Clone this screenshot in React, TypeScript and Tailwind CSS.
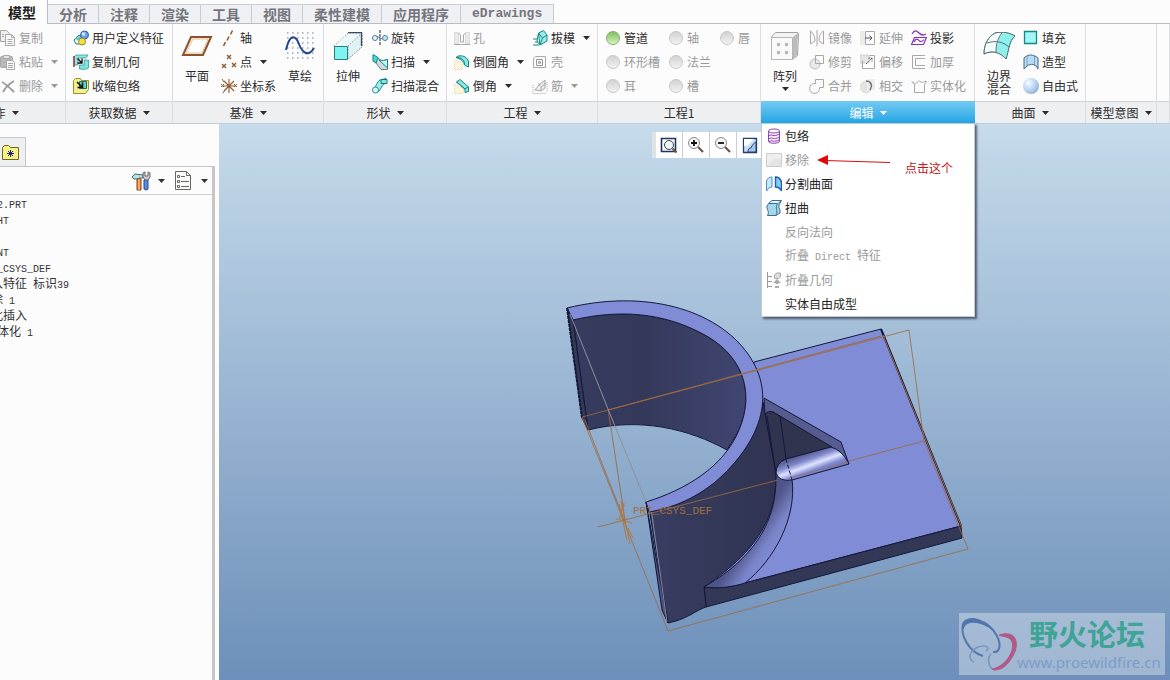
import { clsx } from "clsx";
import type { ReactNode } from "react";

const TABS = ["模型", "分析", "注释", "渲染", "工具", "视图", "柔性建模", "应用程序", "eDrawings"];

const TREE = [
  { name: "PRT2.PRT" },
  { name: "RIGHT" },
  { name: "TOP" },
  { name: "FRONT" },
  { name: "PRT_CSYS_DEF" },
  { name: "导入特征 标识39" },
  { name: "移除 1" },
  { name: "在此插入" },
  { name: "实体化 1", nested: true },
];

/* Latin runs are set half as wide as a Chinese character */
const Label = ({ text }: { text: string }) => (
  <span className="whitespace-pre">
    {text.split(/([\x20-\x7e]+)/).map((part, i) =>
      i % 2 === 1 ? (
        <span key={i} className="font-['Liberation_Mono',monospace] text-[10px]">
          {part}
        </span>
      ) : (
        part
      ),
    )}
  </span>
);

const Caret = ({ className }: { className?: string }) => (
  <svg viewBox="0 0 7 4" className={clsx("h-1 w-[7px] shrink-0", className)} fill="currentColor" aria-hidden="true">
    <path d="M0 0h7L3.5 4z" />
  </svg>
);

const Svg = ({ children, size = "sm" }: { children: ReactNode; size?: "sm" | "lg" }) => (
  <svg
    viewBox={size === "lg" ? "0 0 32 28" : "0 0 16 16"}
    className={clsx("shrink-0", size === "lg" ? "h-7 w-8" : "h-4 w-4")}
    fill="none"
    stroke="#a8a8a8"
    aria-hidden="true"
  >
    {children}
  </svg>
);

const ICONS = {
  copy: (
    <Svg>
      <path d="M.5.5h6l3 3v8h-9z" fill="#f0f0f0" />
      <path d="M5.5 4.5h6l3 3v8h-9z" fill="#fafafa" />
      <path d="M11.5 4.5v3h3M7.5 9.5h5M7.5 11.5h5M7.5 13.5h5M2 4.5h2M2 6.5h2" />
    </Svg>
  ),
  paste: (
    <Svg>
      <rect x=".5" y="2.5" width="12" height="11" rx="1" fill="#b9b9b9" />
      <path d="M3.5 1.5h6v3h-6z" fill="#e4e4e4" />
      <path d="M6.5 6.5h6l2 2v7h-8z" fill="#fafafa" />
      <path d="M8 9.5h5M8 11.5h5M8 13.5h5" />
    </Svg>
  ),
  remove: (
    <Svg>
      <path d="M2 4c4 2 8 6 12 10M14 3C9 6 5 10 3 14" stroke="#999" strokeWidth="1.8" />
    </Svg>
  ),
  udf: (
    <Svg>
      <path d="M1 10l5-5 5 4-5 5H3z" fill="#fff" stroke="#167c80" />
      <path d="M2 9l4-3 4 3-4 2z" fill="#5ed0d0" stroke="none" />
      <circle cx="11.5" cy="5" r="4" fill="#6a9ff0" stroke="#2d5fae" />
      <circle cx="10.5" cy="4" r="1.8" fill="#d8e8ff" stroke="none" />
      <ellipse cx="9" cy="11.5" rx="3.5" ry="3.5" fill="#f1e04a" stroke="#9a8a1c" />
    </Svg>
  ),
  copyGeom: (
    <Svg>
      <path d="M3 1h12l-2 3H5v7H1V3z" fill="#8be6e6" stroke="#2a8d8d" strokeWidth=".7" />
      <path d="M1 2v11" stroke="#b03030" strokeWidth="1.5" />
      <path d="M4.500 4.500l4 4M9 4.500V9H4.500" stroke="#111" strokeWidth="1.300" />
      <path d="M6.500 15v-4H11V6h4.500v8l-4 1.500z" fill="#7be3df" stroke="#2a8d8d" strokeWidth=".7" />
    </Svg>
  ),
  shrink: (
    <Svg>
      <path d="M.5 2.5l2-2h5l1 2h7v9l-3 4H.5z" fill="#f5ee8b" stroke="#9b8f2c" />
      <path d="M6.5 3.5h7v7h-7z" fill="#5fd0d0" stroke="#0e6f6f" />
      <path d="M4 4l5 5M9.5 4.5v5h-5" stroke="#111" strokeWidth="1.5" />
    </Svg>
  ),
  axis: (
    <Svg>
      <path d="M11.5.5l-2 4M8 6.500l-2 4M4.500 12l-2 4" stroke="#8f5a30" strokeWidth="1.6" />
    </Svg>
  ),
  point: (
    <Svg>
      <path d="M6 1l4 4M10 1L6 5M1 10l4 4M5 10l-4 4M11 9l4 4M15 9l-4 4" stroke="#8f5a30" strokeWidth="1.4" />
    </Svg>
  ),
  csys: (
    <Svg>
      <path d="M8 1v14M1 8h14M3 3l10 10M13 3L3 13" stroke="#8f5a30" strokeWidth="1.1" />
      <path d="M0 6l3 3M3 6L0 9M13 6l3 3M16 6l-3 3M1 1l2 3M2 15l2-3" stroke="#8f5a30" />
    </Svg>
  ),
  revolve: (
    <Svg>
      <path d="M8 0v16" stroke="#222" strokeDasharray="3 1" />
      <ellipse cx="3" cy="8" rx="2.5" ry="2.5" fill="#e4f6fa" stroke="#537a98" />
      <ellipse cx="13" cy="8" rx="2.5" ry="2.5" fill="#bfeff0" stroke="#537a98" />
      <path d="M5 6.500l5.500 2.500" stroke="#537a98" />
    </Svg>
  ),
  sweep: (
    <Svg>
      <path d="M5 3.5l5 3.500 5.500-1.500v10H9L4 9z" fill="#d3d8da" stroke="#6c8080" />
      <path d="M1 .5l5 3-2 5.500-3-2z" fill="#4fd6cf" stroke="#118a86" />
      <path d="M7 6l8.500 8V5.500l-4 1z" fill="#c8f5f1" stroke="#118a86" />
    </Svg>
  ),
  blend: (
    <Svg>
      <path d="M1 11C5 9 4 4 8 2l6-1.500v5C9 6 10 11 6 14z" fill="#9eeeea" stroke="#118a86" />
      <circle cx="3.5" cy="12" r="3" fill="#dffcfa" stroke="#1e90a8" />
      <path d="M9 1.5h6v4H9z" fill="#8ae5e0" stroke="#0f7b78" />
    </Svg>
  ),
  hole: (
    <Svg>
      <path d="M.5 2.5h4v11h-4zM11.5 2.5h4v11h-4z" fill="#e9e9e9" stroke="#c4c4c4" strokeDasharray="1 1" />
      <path d="M4.5 3l2 2v7h3V5l2-2M0 14.5h16" />
    </Svg>
  ),
  round: (
    <Svg>
      <path d="M.5 6v9.500h8V9z" fill="#fbf3da" stroke="#e2d6a8" strokeDasharray="1 1" />
      <path d="M2 3.5C5 0 14 2 14.500 8v5l-4-2C10 7 6 5 2 3.5z" fill="#8ce8e3" stroke="#128782" />
      <path d="M2 3.5C7 3 11 6 10.500 11" stroke="#128782" />
    </Svg>
  ),
  chamfer: (
    <Svg>
      <path d="M.5 6v9.500h9V11z" fill="#fbf3da" stroke="#e2d6a8" strokeDasharray="1 1" />
      <path d="M2.500 4l3.500-2.500 8.500 7.500v4.500l-3.500 1V11z" fill="#8ce8e3" stroke="#128782" />
      <path d="M2.500 4l8.500 7 3.500-2.500" stroke="#128782" />
    </Svg>
  ),
  draft: (
    <Svg>
      <path d="M6.5 3l5-2.500L15 5v6l-7 4z" fill="#9cece8" stroke="#118a86" />
      <path d="M6.5 3L5 11l3 4M6.5 3l4 5L8 15M10.5 8L15 5" stroke="#118a86" />
      <path d="M1 9h4M3 12h3M1 15h6" stroke="#128782" />
    </Svg>
  ),
  shell: (
    <Svg>
      <path d="M3.5 2.5h10v11h-12v-9z" />
      <path d="M4.500 5.500h6v6h-6z" stroke="#999" />
      <path d="M6.500 7.500h2v2h-2z" fill="#ddd" />
    </Svg>
  ),
  rib: (
    <Svg>
      <path d="M1 7v8.500h12l2-2V3.500" strokeDasharray="1 1" />
      <path d="M3 12l4-5 6-5v8l-4 3z" fill="#ececec" />
      <path d="M7 5v3M9 13V9l5-4" />
    </Svg>
  ),
  mirror: (
    <Svg>
      <path d="M8 0v16M1.5 1v13L6 11c0-5-2-8-4.500-10zM14.5 1v13L10 11c0-6 2-8 4.500-10z" />
    </Svg>
  ),
  trim: (
    <Svg>
      <path d="M6.5 1.5h8v8h-8z" />
      <circle cx="6" cy="10" r="5" fill="#e9e9e9" stroke="#bbb" />
      <path d="M6.5 5v4.500h4.500" />
    </Svg>
  ),
  merge: (
    <Svg>
      <path d="M6.5 5.5v-4h8v8h-4a5 5 0 1 1-4-4z" fill="#fafafa" />
    </Svg>
  ),
  extend: (
    <Svg>
      <path d="M0 1h5v14H0z" fill="#ececec" stroke="none" />
      <path d="M5.5 1.5h9v13h-9z" />
      <path d="M5 8h7M9.5 5.5L12 8l-2.500 2.500" stroke="#555" />
    </Svg>
  ),
  offset: (
    <Svg>
      <path d="M0 1h9v8H0z" fill="#e5e5e5" stroke="#c8c8c8" strokeDasharray="2 1" />
      <path d="M2.5 6.5v8h12v-13h-5" />
      <path d="M6 10l6-6M8.5 4H12v3.500" stroke="#555" strokeDasharray="2 1" />
    </Svg>
  ),
  intersect: (
    <Svg>
      <circle cx="6" cy="9" r="6" fill="#e4e4e4" stroke="#ddd" />
      <path d="M7 1h8v11H7z" fill="#ececec" stroke="none" />
      <path d="M6 3c5 0 7 4 4 9" stroke="#777" strokeWidth="1.5" />
    </Svg>
  ),
  project: (
    <Svg>
      <path d="M1 4c3-5 5-3 7-1s4 3 7 1" stroke="#8a2fb0" strokeWidth="1.3" />
      <path d="M3.5 7.5h12l-3 7H.5zM3 12c2-4 4-3 5-1.500s3 1.500 5-1" stroke="#8a2fb0" strokeWidth="1.2" />
    </Svg>
  ),
  thicken: (
    <Svg>
      <path d="M14 1.5H1.500v13H14M14 4.5H4.500v7H14" />
    </Svg>
  ),
  solidify: (
    <Svg>
      <path d="M1 3.500l2.500 3v8h10v-8l2-3C13 3 12 5.500 10 4S7 3 5.500 5 2 5 1 3.500z" />
    </Svg>
  ),
  fill: (
    <Svg>
      <path d="M1.5 1.5h12v12h-12z" fill="#a3f6f6" stroke="#128a8a" strokeWidth="1.3" />
    </Svg>
  ),
  style: (
    <Svg>
      <path d="M1 4c4-4 9-4 14 0v11c-2-5-7-6-11-3l-3 3z" fill="#b9daf3" stroke="#446b91" />
      <path d="M4 2.5V12M11.5 2.5v9" stroke="#446b91" strokeDasharray="1 1" />
    </Svg>
  ),
  freestyle: <span className="h-4 w-4 shrink-0 rounded-full bg-radial-[at_35%_30%] from-[#f4faff] via-[#b6d2f0] to-[#6e93c6]" />,
  ball: (
    <span className="mx-px h-[14px] w-[14px] shrink-0 rounded-full border border-[#c8c8c8] bg-linear-to-b from-[#d2d2d2] via-[#e2e2e2] to-[#f2f2f2]" />
  ),
  greenBall: (
    <span className="mx-px h-[14px] w-[14px] shrink-0 rounded-full border border-[#8aa57e] bg-linear-to-b from-[#7cc35c] via-[#a6da88] to-[#d9f5c4]" />
  ),
  wrap: (
    <Svg>
      <path d="M2.5 3v10c0 3 11 3 11 0V3" fill="#faf0fd" stroke="#8f45b0" />
      <ellipse cx="8" cy="3" rx="5.5" ry="2" fill="#fff" stroke="#8f45b0" />
      <path d="M3 8c3-3 4 2 10-2M3 11c3-3 5 2 10-2M3 14c3-3 5 1 10-2" stroke="#8f45b0" />
    </Svg>
  ),
  removeSurface: (
    <Svg>
      <path d="M.5 1.5h15v13H.5z" fill="#eee" stroke="#ccc" />
      <path d="M1 14l8-8 6 1v7z" fill="#e4e4e4" stroke="none" />
    </Svg>
  ),
  split: (
    <Svg>
      <path d="M.5 15V5c1-3 3-4 5.500-4v10c-3 0-4 2-5.500 4z" fill="#c6e8fa" stroke="#4c8eb8" />
      <path d="M9.5 1c3 0 5 2 6 5v9c-1-2-3-4-6-4z" fill="#8cc6f4" stroke="#1763a8" strokeWidth="1.400" />
    </Svg>
  ),
  warp: (
    <Svg>
      <path d="M3 3l3-2.500h9.500L13 5c-1 3 2 5 1 8l-4 2.500H1.500C4 11 0 9 1 6z" fill="#a6d6ec" stroke="#3a6d8e" />
      <path d="M3 3.5h8.500L15 1M11.500 4c-3 4 1 7-1.500 11" stroke="#3a6d8e" />
      <path d="M4 2.5l3-1.500h7l-2 2z" fill="#eef8fc" stroke="none" />
    </Svg>
  ),
  collapse: (
    <Svg>
      <path d="M1.5 0v16M2 4.5h4M2 9.5h4M2 14.5h4" stroke="#999" />
      <path d="M8.5 3l2-2h4v4l-2 1.500h-4z" fill="#ddd" />
      <path d="M7 11l4-4 4 4h-2.500v1h-3v-1zM9 14h4v2H9z" fill="#aaa" stroke="none" />
    </Svg>
  ),
  plane: (
    <Svg size="lg">
      <path d="M10 5h20l-8 18H2z" fill="#fff8ef" stroke="#8a532b" strokeWidth="2" />
      <path d="M12 7h15l-6 14H5z" fill="#fff" stroke="#e4be92" />
    </Svg>
  ),
  sketch: (
    <Svg size="lg">
      <path
        d="M3 1h28M3 6h28M3 11h28M3 16h28M3 21h28M3 26h28"
        stroke="#99a5bd"
        strokeWidth="1.5"
        strokeDasharray="1.5 3.5"
      />
      <path d="M2 18C6 0 12 4 15 12s9 14 15 4" stroke="#25468d" strokeWidth="2" />
    </Svg>
  ),
  extrude: (
    <Svg size="lg">
      <path d="M2 14L16 1h14v14L16 27z" fill="#edfafb" stroke="#777" strokeDasharray="1 2" />
      <path d="M16 14L30 1v14L16 27z" fill="#dff3f4" stroke="#666" strokeDasharray="1 2" />
      <path d="M16 .5h13.500V14" stroke="#446" strokeWidth="1.3" />
      <path d="M2.5 14.5h13v13h-13z" fill="#7ff3f0" stroke="#287c84" />
    </Svg>
  ),
  pattern: (
    <Svg size="lg">
      <path d="M2.500 5l4-4.500h22l1 1-1 22-5 4h-21z" fill="#f4f4f4" stroke="#a0a0a0" />
      <path d="M24 5l5-4-1 22-4 4z" fill="#bcbcbc" stroke="none" />
      <path d="M2.5 5.500h21v22h-21z" fill="#fafafa" stroke="#b4b4b4" />
      <path d="M8 11h3v3H8zM16 11h3v3h-3zM8 19h3v3H8zM16 19h3v3h-3z" fill="#b4b4b4" stroke="none" />
    </Svg>
  ),
  boundary: (
    <Svg size="lg">
      <path d="M12 1c8-2 15 0 20 3-6 5-6 14-9 23-6-7-14-9-22-5C1 12 5 5 12 1z" fill="#f4fbfb" />
      <path d="M19 1c6 0 10 1 13 3-5 4-6 13-9 23-3-4-6-6-10-7 0-3 1-6 2-9 1-4 2-7 4-10z" fill="#8df1ee" stroke="none" />
      <path
        d="M12 1c8-2 15 0 20 3-6 5-6 14-9 23-6-7-14-9-22-5C1 12 5 5 12 1zM19 .5C15 6 13 12 13 20M4 11c9-3 16-1 22 4"
        stroke="#4f6f76"
      />
    </Svg>
  ),
};

type IconName = keyof typeof ICONS;

type ToolProps = { icon: IconName; label: string; disabled?: boolean; menu?: boolean };

const Tool = ({ icon, label, disabled, menu }: ToolProps) => (
  <button type="button" disabled={disabled} className="flex h-6 items-center gap-[3px] text-[#2b2b2b] disabled:text-[#999]">
    {ICONS[icon]}
    <Label text={label} />
    {menu && <Caret className="ml-[5px]" />}
  </button>
);

const BigTool = ({ icon, lines, menu }: { icon: IconName; lines: string[]; menu?: boolean }) => (
  <button
    type="button"
    className="flex w-12 shrink-0 flex-col items-center self-start pt-[6px] leading-[13px] text-[#2b2b2b]"
  >
    {ICONS[icon]}
    <span className="mt-[9px] flex flex-col">
      {lines.map((line) => (
        <span key={line}>{line}</span>
      ))}
    </span>
    {menu && <Caret className="mt-[5px]" />}
  </button>
);

const Column = ({ tools }: { tools: ToolProps[] }) => (
  <div className="flex shrink-0 flex-col items-start">
    {tools.map((tool) => (
      <Tool key={tool.label} {...tool} />
    ))}
  </div>
);

type GroupProps = {
  title?: string;
  menu?: boolean;
  open?: boolean;
  className: string;
  bodyClassName?: string;
  children?: ReactNode;
  popup?: ReactNode;
};

const Group = ({ title, menu = true, open, className, bodyClassName, children, popup }: GroupProps) => (
  <section className={clsx("relative flex flex-col border-r border-[#dcdee1]", className)}>
    <div className={clsx("flex h-[77px] pt-[2px]", bodyClassName)}>{children}</div>
    <button
      type="button"
      aria-expanded={open}
      className={clsx(
        "flex h-[22px] items-center justify-center gap-[6px] border-t",
        open
          ? "-mr-px border-[#6ec6ee] bg-linear-to-b from-[#6fcaf2] to-[#1ba5e4] text-white"
          : "border-[#cfd2d6] bg-[#eeeff1] text-[#2b2b2b]",
      )}
    >
      {title && <span>{title}</span>}
      {title && menu && <Caret />}
    </button>
    {popup}
  </section>
);

const EDIT_MENU: { icon?: IconName; label: string; disabled?: boolean }[] = [
  { icon: "wrap", label: "包络" },
  { icon: "removeSurface", label: "移除", disabled: true },
  { icon: "split", label: "分割曲面" },
  { icon: "warp", label: "扭曲" },
  { label: "反向法向", disabled: true },
  { label: "折叠 Direct 特征", disabled: true },
  { icon: "collapse", label: "折叠几何", disabled: true },
  { label: "实体自由成型" },
];

const EditMenu = () => (
  <div className="absolute top-full left-0 z-20 w-[214px] border border-[#c3cad1] bg-white shadow-[2px_2px_2px_rgba(40,50,70,0.7)]">
    <ul>
      {EDIT_MENU.map(({ icon, label, disabled }) => (
        <li key={label}>
          <button
            type="button"
            disabled={disabled}
            className="flex h-6 w-full items-center gap-[3px] pl-1 text-[#222] disabled:text-[#999]"
          >
            {icon ? ICONS[icon] : <span className="w-4" />}
            <Label text={label} />
          </button>
        </li>
      ))}
    </ul>
    <div className="absolute top-7 left-[55px] flex items-start text-[#c81414]">
      <svg viewBox="0 0 74 16" className="h-4 w-[74px]" aria-hidden="true">
        <path d="M8 8.500L73 10.500" stroke="#d01010" strokeWidth="1.2" />
        <path d="M0 8l11-5v10z" fill="#e00808" />
      </svg>
      <span className="mt-2 ml-[14px] leading-4">点击这个</span>
    </div>
  </div>
);

const Ribbon = () => (
  <header className="relative z-10 bg-[#fcfcfd]">
    <nav className="flex h-6 items-end border-b border-[#b9bcc0]">
      {TABS.map((tab, i) => (
        <button
          key={tab}
          type="button"
          className={clsx(
            "shrink-0 border-r font-bold",
            i === 0
              ? "-mb-px h-6 border-[#b9bcc0] bg-[#fcfcfd] pr-[11px] pl-2 text-[#222]"
              : "h-[19px] border-t border-[#c9ccd1] bg-[#eff0f3] text-[#74757c]",
            tab === "eDrawings"
              ? "px-[11px] font-['Liberation_Mono',monospace] text-[13px] leading-4"
              : "text-[14px] leading-4",
            i > 0 && tab !== "eDrawings" && "px-[11px]",
          )}
        >
          {tab}
        </button>
      ))}
    </nav>
    <div className="flex border-b border-[#c0ccd8]">
      {/* first group is scrolled half out of view */}
      <Group title="操作" className="-ml-[65px] w-[131px] shrink-0" bodyClassName="justify-end pr-[7px]">
        <Column
          tools={[
            { icon: "copy", label: "复制", disabled: true },
            { icon: "paste", label: "粘贴", disabled: true, menu: true },
            { icon: "remove", label: "删除", disabled: true, menu: true },
          ]}
        />
      </Group>
      <Group title="获取数据" className="w-[107px] shrink-0" bodyClassName="pl-[7px]">
        <Column
          tools={[
            { icon: "udf", label: "用户定义特征" },
            { icon: "copyGeom", label: "复制几何" },
            { icon: "shrink", label: "收缩包络" },
          ]}
        />
      </Group>
      <Group title="基准" className="w-[151px] shrink-0">
        <BigTool icon="plane" lines={["平面"]} />
        <Column
          tools={[
            { icon: "axis", label: "轴" },
            { icon: "point", label: "点", menu: true },
            { icon: "csys", label: "坐标系" },
          ]}
        />
        <BigTool icon="sketch" lines={["草绘"]} />
      </Group>
      <Group title="形状" className="w-[123px] shrink-0">
        <BigTool icon="extrude" lines={["拉伸"]} />
        <Column
          tools={[
            { icon: "revolve", label: "旋转" },
            { icon: "sweep", label: "扫描", menu: true },
            { icon: "blend", label: "扫描混合" },
          ]}
        />
      </Group>
      <Group title="工程" className="w-[151px] shrink-0" bodyClassName="gap-2 pl-[7px]">
        <Column
          tools={[
            { icon: "hole", label: "孔", disabled: true },
            { icon: "round", label: "倒圆角", menu: true },
            { icon: "chamfer", label: "倒角", menu: true },
          ]}
        />
        <Column
          tools={[
            { icon: "draft", label: "拔模", menu: true },
            { icon: "shell", label: "壳", disabled: true },
            { icon: "rib", label: "筋", disabled: true, menu: true },
          ]}
        />
      </Group>
      <Group title="工程1" menu={false} className="w-[163px] shrink-0" bodyClassName="gap-2 pl-[7px]">
        <Column
          tools={[
            { icon: "greenBall", label: "管道" },
            { icon: "ball", label: "环形槽", disabled: true },
            { icon: "ball", label: "耳", disabled: true },
          ]}
        />
        <Column
          tools={[
            { icon: "ball", label: "轴", disabled: true },
            { icon: "ball", label: "法兰", disabled: true },
            { icon: "ball", label: "槽", disabled: true },
          ]}
        />
        <Column tools={[{ icon: "ball", label: "唇", disabled: true }]} />
      </Group>
      <Group title="编辑" open className="w-[214px] shrink-0" popup={<EditMenu />}>
        <BigTool icon="pattern" lines={["阵列"]} menu />
        <div className="flex gap-2">
          <Column
            tools={[
              { icon: "mirror", label: "镜像", disabled: true },
              { icon: "trim", label: "修剪", disabled: true },
              { icon: "merge", label: "合并", disabled: true },
            ]}
          />
          <Column
            tools={[
              { icon: "extend", label: "延伸", disabled: true },
              { icon: "offset", label: "偏移", disabled: true },
              { icon: "intersect", label: "相交", disabled: true },
            ]}
          />
          <Column
            tools={[
              { icon: "project", label: "投影" },
              { icon: "thicken", label: "加厚", disabled: true },
              { icon: "solidify", label: "实体化", disabled: true },
            ]}
          />
        </div>
      </Group>
      <Group title="曲面" className="w-[111px] shrink-0">
        <BigTool icon="boundary" lines={["边界", "混合"]} />
        <Column
          tools={[
            { icon: "fill", label: "填充" },
            { icon: "style", label: "造型" },
            { icon: "freestyle", label: "自由式" },
          ]}
        />
      </Group>
      <Group title="模型意图" className="w-[71px] shrink-0" />
      <Group className="grow" />
    </div>
  </header>
);

const ModelTree = () => (
  <aside className="flex w-[219px] shrink-0 flex-col overflow-hidden bg-[#fcfcfd] pt-[13px]">
    <button
      type="button"
      aria-label="文件夹"
      className="flex h-[29px] w-[26px] items-center border-t border-r border-[#c6c8cc] bg-[#eeeff1] pl-[2px]"
    >
      <svg viewBox="0 0 17 15" className="h-[15px] w-[17px]" fill="none" aria-hidden="true">
        <path d="M.5 14.5V2.500l2-2h4l2 2h8v12z" fill="#f7f283" stroke="#6d6928" />
        <path d="M8.5 5v7M5 8.500h7M6 6l5 5M11 6l-5 5" stroke="#1b237c" />
      </svg>
    </button>
    <div className="mr-1 flex grow flex-col border-t border-r-3 border-[#c6c6c8]">
      <div className="flex h-7 items-center justify-end border-b border-[#cfd0d3] pr-1 text-[#333]">
        <button type="button" aria-label="设置" className="flex items-center gap-[7px]">
          <svg viewBox="0 0 20 20" className="h-5 w-5" fill="none" aria-hidden="true">
            <path d="M1 6l3-3 8 1v3H8v1H5L3 8z" fill="#b9e0e2" stroke="#3c6e78" />
            <path d="M6 8h4v11H6z" fill="#e98a36" stroke="#8e3e12" />
            <path d="M8 8v11" stroke="#f8d09a" />
            <path d="M13 9h4v9l-2 1-2-1z" fill="#5b8ae0" stroke="#234a96" />
            <path d="M12 2v4l2 3h3l2-3V2l-2-1v4h-3V1z" fill="#ccc" stroke="#666" />
          </svg>
          <Caret />
        </button>
        <button type="button" aria-label="显示" className="ml-[9px] flex items-center gap-[9px]">
          <svg viewBox="0 0 18 20" className="h-5 w-[18px]" fill="none" stroke="#666" aria-hidden="true">
            <path d="M1.5.5h11l4 4v14h-15z" fill="#fbfbf8" />
            <path d="M12.5.5v4h4M7 5.5h4M7 10.5h8M7 15.5h8" />
            <path d="M3.5 4.5h2v2h-2zM3.5 9.5h2v2h-2zM3.5 14.5h2v2h-2z" />
          </svg>
          <Caret />
        </button>
      </div>
      <ul className="-ml-[21px] text-[#333]">
        {TREE.map(({ name, nested }) => (
          <li key={name} className={clsx("h-4 leading-4", nested && "pl-[6px]")}>
            <Label text={name} />
          </li>
        ))}
      </ul>
    </div>
  </aside>
);

const LENS_TOOLS = [
  {
    label: "重新调整",
    icon: (
      <>
        <path d="M1.5 2.5h14v13h-14z" fill="#fff" stroke="#1b3766" strokeWidth="1.6" />
        <circle cx="9" cy="9" r="4.5" fill="#eef5f8" stroke="#444" />
        <path d="M12.5 12.5l4 4" stroke="#6a5040" strokeWidth="2" />
      </>
    ),
  },
  {
    label: "放大",
    icon: (
      <>
        <circle cx="7" cy="7" r="5.5" fill="#f4f6f8" stroke="#888" />
        <path d="M4 7h6M7 4v6" stroke="#111" strokeWidth="1.8" />
        <path d="M11 11l5 5" stroke="#6a5040" strokeWidth="2" />
      </>
    ),
  },
  {
    label: "缩小",
    icon: (
      <>
        <circle cx="7" cy="7" r="5.5" fill="#f4f6f8" stroke="#888" />
        <path d="M4 7h6" stroke="#111" strokeWidth="1.8" />
        <path d="M11 11l5 5" stroke="#6a5040" strokeWidth="2" />
      </>
    ),
  },
  {
    label: "重画",
    icon: (
      <>
        <path d="M2.5 2.5h13v14h-13z" fill="#c8dff5" stroke="#1f3d70" strokeWidth="1.3" />
        <path d="M3 3h10L6 10H3z" fill="#fff" />
        <path d="M7 16c0-3 1-4 3-4 1-3 3-5 5-6v10z" fill="#a8c6e8" stroke="#1f3d70" />
      </>
    ),
  },
];

const Bracket = () => (
  <svg
    viewBox="219 124 951 556"
    preserveAspectRatio="xMidYMid meet"
    className="h-full w-full"
    fill="none"
    stroke="#14183a"
    strokeWidth="1"
    strokeLinejoin="round"
    aria-hidden="true"
  >
    <defs>
      <linearGradient id="inner" x1="573" x2="745" y1="0" y2="0" gradientUnits="userSpaceOnUse">
        <stop offset="0" stopColor="#373c60" />
        <stop offset=".4" stopColor="#343859" />
        <stop offset="1" stopColor="#404672" />
      </linearGradient>
      <linearGradient id="outer" x1="650" x2="776" y1="0" y2="0" gradientUnits="userSpaceOnUse">
        <stop offset="0" stopColor="#383d62" />
        <stop offset="1" stopColor="#303451" />
      </linearGradient>
      <linearGradient id="roll" x1="812" x2="820" y1="452" y2="474" gradientUnits="userSpaceOnUse">
        <stop offset="0" stopColor="#5b6197" />
        <stop offset=".25" stopColor="#8189cb" />
        <stop offset=".5" stopColor="#dfe3ff" />
        <stop offset=".75" stopColor="#7f88d0" />
        <stop offset="1" stopColor="#6d75b8" />
      </linearGradient>
      <linearGradient id="fillet" x1="748" x2="772" y1="540" y2="556" gradientUnits="userSpaceOnUse">
        <stop offset="0" stopColor="#4f5588" />
        <stop offset=".6" stopColor="#7983c8" />
        <stop offset="1" stopColor="#808cd5" />
      </linearGradient>
    </defs>

    {/* base plate */}
    <path d="M754 362L881 329L961 526L745 583L704 587Z" fill="#808cd5" />
    <path d="M704 587C718 589 732 587 745 583L961 526L962 538L706 607Z" fill="#343857" />
    <path d="M881 329L961 526" strokeWidth="2" />

    {/* outer cylinder wall */}
    <path
      d="M648 508C704 497 758 450 763 402L776 470C777 510 765 546 704 587L706 607C696 610 688 619 668 623L649 508Z"
      fill="url(#outer)"
    />
    <path d="M646 502L668 623L662 610L646 502Z" fill="#4b5180" />
    <path d="M651 508L667 622" stroke="#8a8c98" />

    {/* fillet along the cylinder foot */}
    <path
      d="M776 474C777 515 761 554 704 587C718 589 732 587 745 583C774 560 797 518 792 479Z"
      fill="url(#fillet)"
    />

    {/* stiffening rib */}
    <path d="M764 398L841 442L849 464L834 449L773 412L765 414Z" fill="#565c8f" />
    <path d="M765 414Q768 410 773 412L832 447L786 459Q776 462 776 474Z" fill="#31344f" />
    <path d="M767 416L776 474M780 416L786 459" />
    <path d="M786 459L831 447Q842 450 849 464L792 480Q779 482 776 473Q776 463 786 459Z" fill="url(#roll)" />
    <path d="M786 459L792 480" strokeDasharray="4 2" />

    {/* ring */}
    <path
      d="M573 320C620 309 663 313 701 333C741 353 756 390 739 430L727 450C689 429 640 417 588 430Z"
      fill="url(#inner)"
    />
    <path
      fillRule="evenodd"
      d="M567 308C645 289 716 309 748 354C779 398 756 442 725 473C704 494 678 507 649 512L646 502C685 490 724 467 739 430C756 390 741 353 701 333C663 313 620 309 573 320Z"
      fill="#808cd5"
    />
    <path d="M567 308L573 320L588 430L582 418Z" fill="#343956" />
    <path d="M567 308L582 418" strokeWidth="2" strokeDasharray="3 1" />

    {/* datum planes */}
    <g stroke="#9c6a42">
      <path d="M582 417L909 330L924 441L968 549L668 631Z" strokeOpacity=".8" />
      <path d="M608 410L881 336" />
      <path d="M598 527L778 480M849 461L924 441M608 409L625 520M585 420L625 522" strokeOpacity=".85" />
      <path d="M883 335L962 528" />
      <path d="M789 478L848 462" strokeOpacity=".6" />
      <path
        d="M621 501L630 544M616 519L632 523M619 504L627 540M624 503L619 519M621 510L625 505M628 528L633 538"
        stroke="#b07a3c"
      />
    </g>
    <path d="M570 314L608 409L646 502" stroke="#8e909f" />
    <text x="633" y="514" className="font-['Liberation_Mono',monospace] text-[11px]" fill="#a0713c" stroke="none">
      PRT_CSYS_DEF
    </text>
  </svg>
);

const Watermark = () => (
  <div className="absolute right-[5px] bottom-[5px] flex h-[62px] w-[206px] bg-white/35">
    <svg viewBox="0 0 58 62" className="h-[62px] w-[58px] shrink-0" fill="none" aria-hidden="true">
      <path d="M24 43C10 39 1 22 4 11C8 1 30 7 38 23C43 33 40 40 34 39" stroke="#5379ad" strokeWidth="2" />
      <path d="M4 16C4 2 20 3 34 17C22 8 7 6 4 16Z" fill="#4e74aa" stroke="#4e74aa" />
      <path d="M40 22C58 16 62 32 52 46C45 58 34 58 33 56C47 54 58 35 52 27C49 23 43 24 40 22Z" fill="#b05a86" stroke="#b05a86" />
      <path d="M33 56C28 50 29 44 32 41M15 49C5 44 15 33 25 33C29 33 30 36 27 38" stroke="#7896c4" strokeWidth="1.5" />
    </svg>
    <div className="flex flex-col">
      <span className="ml-3 font-['Noto_Sans_CJK_SC',sans-serif] text-[29px] leading-[40px] font-bold whitespace-nowrap text-[#3fa396]">
        野火论坛
      </span>
      <a href="#forum" className="font-['Noto_Sans',sans-serif] text-[15px] leading-[18px] text-[#7c9cc8]">
        www.proewildfire.cn
      </a>
    </div>
  </div>
);

const Viewport = () => (
  <main className="relative min-w-0 grow overflow-hidden bg-linear-to-b from-[#c6dbeb] to-[#6d8fb9]">
    <Bracket />
    <div className="absolute top-2 left-[433px] flex h-[26px] border-l-4 border-[#dfe3e6] bg-white">
      {LENS_TOOLS.map(({ label, icon }) => (
        <button
          key={label}
          type="button"
          aria-label={label}
          className="flex w-[27px] items-center justify-center border-r border-[#c3d0dc]"
        >
          <svg viewBox="0 0 18 18" className="h-[18px] w-[18px]" fill="none" aria-hidden="true">
            {icon}
          </svg>
        </button>
      ))}
    </div>
    <Watermark />
  </main>
);

const App = () => (
  <div className="flex h-screen flex-col overflow-hidden bg-[#fcfcfd] font-['Noto_Sans_CJK_SC',sans-serif] text-[12px] leading-4">
    <Ribbon />
    <div className="flex min-h-0 grow">
      <ModelTree />
      <Viewport />
    </div>
  </div>
);

export default App;
